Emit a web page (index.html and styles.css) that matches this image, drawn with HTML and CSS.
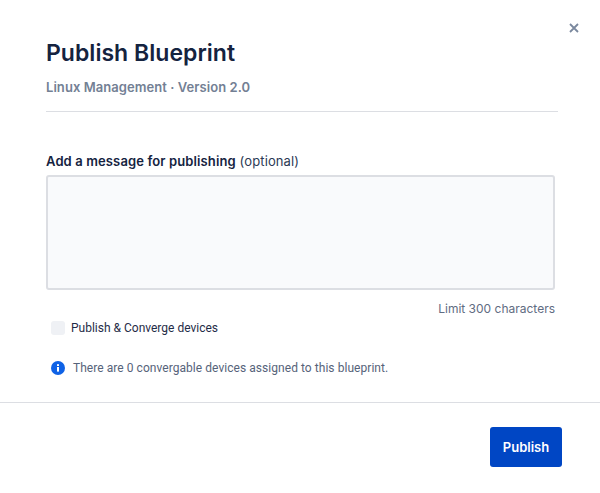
FILE: index.html
```html
<!DOCTYPE html>
<html lang="en">

<head>
    <meta charset="UTF-8">
    <meta name="viewport" content="width=device-width, initial-scale=1.0">
    <title>Publish Blueprint</title>
    <link rel="stylesheet" href="styles.css">
</head>

<body>
    <div class="modal">
        <button class="close" aria-label="Close">
            <svg width="10" height="10" viewBox="0 0 10 10">
                <path d="M1 1l8 8M9 1l-8 8" stroke="#7a889e" stroke-width="1.8" fill="none" />
            </svg>
        </button>

        <div class="modal-header">
            <h1>Publish Blueprint</h1>
            <p class="subtitle">Linux Management · Version 2.0</p>
        </div>

        <div class="modal-body">
            <label class="message-label" for="message"><b>Add a message for publishing</b> (optional)</label>
            <textarea id="message" class="message"></textarea>
            <div class="limit">Limit 300 characters</div>

            <label class="converge">
                <span class="checkbox"></span>
                Publish &amp; Converge devices
            </label>

            <div class="info">
                <svg width="14" height="14" viewBox="0 0 14 14">
                    <circle cx="7" cy="7" r="7" fill="#0f62e6" />
                    <rect x="6" y="6" width="2" height="4.6" fill="#fff" />
                    <rect x="6" y="3.2" width="2" height="1.8" fill="#fff" />
                </svg>
                There are 0 convergable devices assigned to this blueprint.
            </div>
        </div>

        <div class="modal-footer">
            <button class="publish">Publish</button>
        </div>
    </div>
</body>

</html>
```

FILE: styles.css
```css
* {
    box-sizing: border-box;
}

body {
    margin: 0;
    background: #fff;
    font-family: "Inter", "Liberation Sans", sans-serif;
}

.modal {
    position: relative;
    width: 600px;
    height: 493px;
    overflow: hidden;
}

.close {
    position: absolute;
    top: 23px;
    right: 21px;
    width: 10px;
    height: 10px;
    padding: 0;
    border: none;
    background: none;
    display: flex;
}

.modal-header {
    margin: 0 42px 0 46px;
    padding: 40px 0 14px;
    border-bottom: 1px solid #dcdee3;
}

h1 {
    margin: 0;
    font-size: 23px;
    line-height: 27px;
    font-weight: 600;
    letter-spacing: 0.03px;
    color: #15233f;
}

.subtitle {
    margin: 10px 0 0;
    font-size: 13px;
    line-height: 20px;
    font-weight: 600;
    letter-spacing: 0.06px;
    color: #738094;
}

.modal-body {
    padding: 40px 45px 0 46px;
}

.message-label {
    display: block;
    font-size: 13px;
    line-height: 18px;
    letter-spacing: 0.12px;
    color: #2c3a55;
}

.message-label b {
    font-weight: 600;
    color: #15233f;
}

.message {
    display: block;
    width: 100%;
    height: 115px;
    margin-top: 5px;
    border: 2px solid #dcdee3;
    border-radius: 3px;
    background: #f9fafc;
    resize: none;
}

.limit {
    margin-top: 11px;
    text-align: right;
    font-size: 12px;
    line-height: 16px;
    color: #5f6c82;
}

.converge {
    display: flex;
    align-items: center;
    gap: 6px;
    margin: 3px 0 0 5px;
    font-family: "Roboto", sans-serif;
    font-size: 12px;
    line-height: 16px;
    color: #1f2c47;
}

.checkbox {
    width: 14px;
    height: 14px;
    border-radius: 3px;
    background: #eff1f5;
}

.info {
    display: flex;
    align-items: center;
    gap: 8px;
    margin: 24px 0 0 5px;
    font-family: "Roboto", sans-serif;
    font-size: 12px;
    line-height: 16px;
    letter-spacing: 0.05px;
    color: #56637a;
}

.modal-footer {
    display: flex;
    justify-content: flex-end;
    margin-top: 26px;
    padding: 24px 38px 0 0;
    border-top: 1px solid #dcdee3;
}

.publish {
    width: 72px;
    height: 40px;
    border: none;
    border-radius: 3px;
    background: #0046c4;
    color: #fff;
    font-family: inherit;
    font-size: 13px;
    font-weight: 600;
}
```
